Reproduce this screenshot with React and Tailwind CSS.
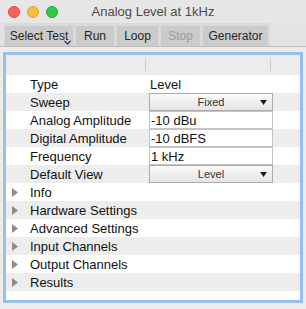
import React from "react";

const FONT = { fontFamily: '"Liberation Sans", Arial, sans-serif' };

function Light({ color, ring }) {
  return <span className={`size-[12px] rounded-full border ${color} ${ring}`} />;
}

function ToolBtn({ label, w, disabled, chevron }) {
  return (
    <div
      className={`relative h-[20px] flex items-center justify-center bg-[#cbcbcb] text-[12px] ${w} ${
        disabled ? "text-[#9a9a9a]" : "text-[#262626]"
      }`}
    >
      {label}
      {chevron && (
        <svg className="absolute right-[2px] bottom-[1px]" width="7" height="5" viewBox="0 0 7 5">
          <path d="M0.5 0.8 L3.5 3.8 L6.5 0.8" fill="none" stroke="#222" strokeWidth="1.2" />
        </svg>
      )}
    </div>
  );
}

function Row({ gray, children }) {
  return (
    <div className={`h-[18px] flex items-center ${gray ? "bg-[#ededed]" : "bg-white"}`}>{children}</div>
  );
}

function Label({ text }) {
  return <span className="w-[143px] pl-[24px] pt-[2px] text-[13px] text-[#111]">{text}</span>;
}

function TextField({ value }) {
  return (
    <div className="w-[124px] h-[18px] border border-[#c4c4c4] bg-white flex items-center pl-[1px] pt-[1px] text-[13px] text-[#111]">
      {value}
    </div>
  );
}

function Select({ value }) {
  return (
    <div className="relative w-[124px] h-[18px] border border-[#ababab] bg-gradient-to-b from-[#fbfbfb] to-[#e4e4e4] flex items-center justify-center text-[11px] text-[#333]">
      {value}
      <svg className="absolute right-[5px] top-[6px]" width="7" height="5" viewBox="0 0 7 5">
        <path d="M0 0 H7 L3.5 5 Z" fill="#1e1e1e" />
      </svg>
    </div>
  );
}

function Group({ text, gray }) {
  return (
    <Row gray={gray}>
      <svg className="ml-[6px] mr-[12px]" width="6" height="9" viewBox="0 0 6 9">
        <path d="M0 0 L6 4.5 L0 9 Z" fill="#8c8c8c" />
      </svg>
      <span className="text-[13px] pt-[2px] text-[#111]">{text}</span>
    </Row>
  );
}

export default function App() {
  return (
    <div style={FONT} className="w-[306px] h-[309px] bg-[#ececec] flex flex-col overflow-hidden">
      {/* title bar */}
      <div className="h-[23px] flex items-center relative bg-[#e6e6e6]">
        <div className="flex gap-[7px] pl-[8px]">
          <Light color="bg-[#fc605c]" ring="border-[#de4a45]" />
          <Light color="bg-[#fdbc40]" ring="border-[#de9f34]" />
          <Light color="bg-[#34c84a]" ring="border-[#27aa35]" />
        </div>
        <span className="absolute left-0 right-0 text-center text-[13px] text-[#4a4a4a] pointer-events-none">
          Analog Level at 1kHz
        </span>
      </div>

      {/* toolbar */}
      <div className="h-[24px] border-b border-[#bdbdbd] bg-[#e3e3e3]">
        <div className="ml-[4px] w-[266px] h-[23px] bg-[#dadada] flex items-end gap-[3px] pl-[1px]">
          <ToolBtn label="Select Test" w="w-[68px]" chevron />
          <ToolBtn label="Run" w="w-[38px]" />
          <ToolBtn label="Loop" w="w-[41px]" />
          <ToolBtn label="Stop" w="w-[39px]" disabled />
          <ToolBtn label="Generator" w="w-[65px]" />
        </div>
      </div>

      {/* settings panel */}
      <div className="mt-[5px] mx-[3px] h-[251px] border-[3px] border-[#98c0ed] bg-white flex flex-col">
        <div className="h-[20px] bg-[#ececec] flex items-center shrink-0">
          <span className="ml-[139px] w-px h-[12px] bg-[#c9c9c9]" />
          <span className="ml-[124px] w-px h-[12px] bg-[#c9c9c9]" />
        </div>
        <Row>
          <Label text="Type" />
          <span className="text-[13px] text-[#111] pl-[1px] pt-[2px]">Level</span>
        </Row>
        <Row gray>
          <Label text="Sweep" />
          <Select value="Fixed" />
        </Row>
        <Row>
          <Label text="Analog Amplitude" />
          <TextField value="-10 dBu" />
        </Row>
        <Row gray>
          <Label text="Digital Amplitude" />
          <TextField value="-10 dBFS" />
        </Row>
        <Row>
          <Label text="Frequency" />
          <TextField value="1 kHz" />
        </Row>
        <Row gray>
          <Label text="Default View" />
          <Select value="Level" />
        </Row>
        <Group text="Info" />
        <Group text="Hardware Settings" gray />
        <Group text="Advanced Settings" />
        <Group text="Input Channels" gray />
        <Group text="Output Channels" />
        <Group text="Results" gray />
      </div>
    </div>
  );
}
